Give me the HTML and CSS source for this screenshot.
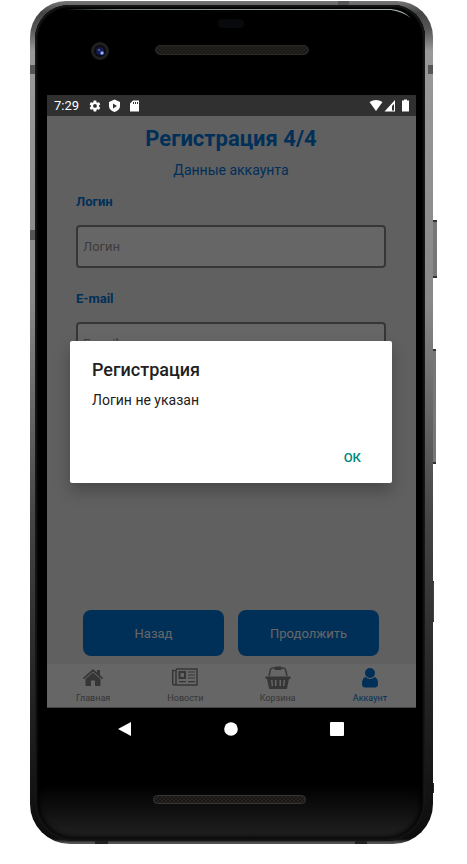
FILE: index.html
```html
<!DOCTYPE html>
<html lang="ru">
<head>
<meta charset="utf-8">
<meta name="viewport" content="width=device-width, initial-scale=1">
<title>Регистрация</title>
<link rel="stylesheet" href="styles.css">
</head>
<body>
<div class="phone">
  <span class="key key-power"></span>
  <span class="key key-volume"></span>
  <span class="key key-lower"></span>
  <span class="key key-foot"></span>
  <span class="seam seam-left-top"></span>
  <span class="seam seam-left-mid"></span>
  <span class="seam seam-right-top"></span>
  <span class="seam seam-top"></span>
  <span class="seam seam-bottom-left"></span>
  <span class="seam seam-bottom-right"></span>
  <div class="bezel">
    <svg class="hardware" viewBox="0 0 390 90" height="90" aria-hidden="true">
      <defs>
        <linearGradient id="shine" x1="0" x2="1"><stop offset="0" stop-color="#899" stop-opacity="0"/><stop offset=".15" stop-color="#788585"/><stop offset="1" stop-color="#a9b5b5"/></linearGradient>
        <pattern id="mesh" width="4" height="4" patternUnits="userSpaceOnUse"><rect width="4" height="4" fill="#171614"/><circle cx="1" cy="1" r="1" fill="#2d2a25"/><circle cx="3" cy="3" r="1" fill="#2b2823"/></pattern>
      </defs>
      <path d="M30 4H356Q368 5 376 13Q368 7 356 5H30Z" fill="url(#shine)"/>
      <rect x="183" y="14" width="26" height="9" rx="4" fill="#08090d"/>
      <circle cx="65" cy="46" r="9" fill="#211f20"/>
      <circle cx="65" cy="46" r="6" fill="#0b0b12"/>
      <circle cx="65" cy="46" r="4" fill="#151b45"/>
      <circle cx="64" cy="45" r="1" fill="#5773c8"/>
      <circle cx="67" cy="48" r="2" fill="#4e6fe0"/>
      <circle cx="67" cy="48" r="1" fill="#b9ccff"/>
      <rect x="120.500" y="40.500" width="153" height="9" rx="4.500" fill="url(#mesh)" stroke="#2b2a28"/>
    </svg>
    <div class="screen">
      <header class="status">
        <span>7:29</span>
        <svg class="status-left" viewBox="0 0 54 14" width="54" height="14" fill="#fff" aria-hidden="true">
          <path transform="translate(-.5 .5) scale(.54)" d="M19.400 13a7.500 7.500 0 0 0 0-2l2.100-1.600c.2-.2.300-.5.100-.7l-2-3.500c-.1-.2-.4-.3-.6-.2l-2.500 1a7 7 0 0 0-1.700-1l-.4-2.600c0-.3-.2-.4-.5-.4h-4c-.3 0-.4.200-.5.400L9 5a7 7 0 0 0-1.700 1l-2.500-1c-.2-.1-.5 0-.6.200l-2 3.500c-.1.200-.1.500.1.700L4.500 11a7.500 7.500 0 0 0 0 2l-2.200 1.600c-.2.200-.2.500-.1.700l2 3.500c.1.200.4.300.6.200l2.500-1a7 7 0 0 0 1.700 1l.4 2.600c.1.200.2.400.5.400h4c.300 0 .5-.2.500-.4l.4-2.600a7 7 0 0 0 1.700-1l2.500 1c.2.100.5 0 .6-.2l2-3.500c.1-.2.100-.5-.1-.7zM12 15.500a3.500 3.500 0 1 1 0-7 3.500 3.500 0 0 1 0 7z"/>
          <path fill-rule="evenodd" d="M25.500 .5L31 3V7Q31 11 25.500 13Q20 11 20 7V3ZM24 4.500V9.500L28 7Z"/>
          <path fill-rule="evenodd" d="M44 1.500H50V12.500H41V4.500ZM44 3V5H45V3ZM46 3V5H47V3ZM48 3V5H49V3Z"/>
        </svg>
        <svg class="status-right" viewBox="0 0 40 14" width="40" height="14" fill="#fff" aria-hidden="true">
          <path d="M.5 3Q7-1 13.500 3L7 12Z"/>
          <path fill-rule="evenodd" d="M26 1V12.500H15.500ZM25 5L23 7V11.500H25Z"/>
          <path d="M35 .5H38V1.500H40V12.500H33V1.500H35Z"/>
        </svg>
      </header>
      <div class="app">
        <main class="form">
          <h1>Регистрация 4/4</h1>
          <p class="subtitle">Данные аккаунта</p>
          <label for="login">Логин</label>
          <input id="login" type="text" placeholder="Логин">
          <label for="email">E-mail</label>
          <input id="email" type="email" placeholder="E-mail">
          <div class="actions">
            <button type="button">Назад</button>
            <button type="button">Продолжить</button>
          </div>
        </main>
        <nav class="tabs">
          <a href="#home">
            <svg viewBox="0 0 26 24" width="26" height="24" fill="currentColor" aria-hidden="true"><path d="M13 8.500L20.500 15V22H15V16.500H11V22H5.500V15Z"/><path d="M13 5L17 8.500V6H20V11L23.200 14L22 15.300L13 7.500L4 15.300L2.800 14Z"/></svg>
            Главная
          </a>
          <a href="#news">
            <svg viewBox="0 0 26 24" width="26" height="24" fill="none" stroke="currentColor" stroke-width="1.500" aria-hidden="true"><path d="M4 5H25V21H2Q.7 21 .7 19V6.500H4V19.500Q4 21 2.500 21"/><path d="M7.500 8H13V14H7.500Z" stroke-width="2"/><path d="M16 8H23M16 11H23M16 14H23M7 17.700H14M16 17.700H23" stroke-width="1.200"/></svg>
            Новости
          </a>
          <a href="#cart">
            <svg viewBox="0 0 26 24" width="26" height="24" aria-hidden="true"><path d="M4 12L5.500 5.500Q6 4 8 4H18Q20 4 20.500 5.500L22 12" fill="none" stroke="currentColor" stroke-width="1.500"/><rect x="9.500" y="2.500" width="7" height="3.500" rx="1" fill="currentColor"/><path fill="currentColor" fill-rule="evenodd" d="M.5 12.500H25.500V15H24L22 24.500Q21.800 25 21 25H5Q4.200 25 4 24.500L2 15H.5ZM6 16L6.700 22H8L7.500 16ZM10 16V22H11.500V16ZM14.500 16V22H16V16ZM18.500 16L18 22H19.300L20 16Z"/></svg>
            Корзина
          </a>
          <a href="#account" class="current">
            <svg viewBox="0 0 26 24" width="26" height="24" fill="currentColor" aria-hidden="true"><circle cx="13" cy="9" r="5"/><path d="M8.500 13Q13 17 17.500 13Q21 14 21 19.500Q21 23.500 18 23.500H8Q5 23.500 5 19.500Q5 14 8.500 13Z"/></svg>
            Аккаунт
          </a>
        </nav>
        <div class="scrim">
          <section class="dialog" role="dialog" aria-labelledby="dialog-title">
            <h2 id="dialog-title">Регистрация</h2>
            <p>Логин не указан</p>
            <button type="button">ОК</button>
          </section>
        </div>
      </div>
    </div>
    <div class="system">
      <svg viewBox="0 0 14 16" width="14" height="16" aria-hidden="true"><path d="M13 1V15L0 8Z" fill="#fff"/></svg>
      <svg viewBox="0 0 14 16" width="14" height="16" aria-hidden="true"><circle cx="7" cy="8" r="6.800" fill="#fff"/></svg>
      <svg viewBox="0 0 14 16" width="14" height="16" aria-hidden="true"><rect y="1" width="14" height="14" rx="1" fill="#fff"/></svg>
    </div>
    <svg class="hardware" viewBox="0 0 390 91" height="91" aria-hidden="true">
      <rect x="118.500" y="45.500" width="152" height="8" rx="4" fill="url(#mesh)" stroke="#383632"/>
    </svg>
  </div>
</div>
</body>
</html>
```
FILE: styles.css
```css
* {
  box-sizing: border-box;
}

body {
  margin: 0;
  background: #fff;
  font-family: Roboto, "Noto Sans", sans-serif;
  font-size: 13px;
}

h1, h2, p {
  margin: 0;
}

button, input {
  font: inherit;
}

.phone {
  position: relative;
  margin: 1px 34px 18px 30px;
  padding: 4px 8px 3px 5px;
  border-radius: 36px 36px 40px 40px;
  background: linear-gradient(#777 0, #444 12px, #555 28px, #999 50px, #888 300px, #444 520px, #222 700px, #0c0c0c 838px, #555 842px);
}

.key {
  position: absolute;
  left: 100%;
  width: 3px;
  background: #777;
  border: solid #333;
  border-width: 2px 0;
}

.key-power { top: 219px; height: 58px; width: 4px; }
.key-volume { top: 348px; height: 115px; }
.key-lower { top: 580px; height: 41px; width: 1px; background: #444; }
.key-foot { top: 782px; height: 10px; width: 1px; background: #222; }

.seam {
  position: absolute;
  background: #555;
}

.seam-left-top { left: 0; top: 64px; width: 5px; height: 9px; }
.seam-left-mid { left: 0; top: 229px; width: 5px; height: 10px; }
.seam-right-top { right: 0; top: 64px; width: 5px; height: 9px; }
.seam-top { right: 84px; top: 0; width: 11px; height: 4px; }
.seam-bottom-left { left: 65px; bottom: 0; width: 13px; height: 3px; background: #222; }
.seam-bottom-right { right: 66px; bottom: 0; width: 12px; height: 3px; background: #222; }

.bezel {
  padding: 0 9px 0 12px;
  border-radius: 34px 32px 38px 38px;
  background: linear-gradient(#000 780px, #232323 836px);
  box-shadow: inset 0 0 2px 2px #181818, inset 0 0 5px 4px #000;
}

.hardware {
  display: block;
  width: calc(100% + 21px);
  margin: 0 -9px 0 -12px;
}

.status {
  display: flex;
  align-items: center;
  height: 21px;
  padding: 0 7px;
  background: #303030;
  color: #fff;
}

.status-left {
  margin-left: 10px;
}

.status-right {
  margin-left: auto;
}

.app {
  position: relative;
  display: flex;
  flex-direction: column;
  min-height: 592px;
  background: #f0f0f0;
}

.form {
  display: flex;
  flex: 1;
  flex-direction: column;
  padding: 8px 30px 8px 29px;
}

h1 {
  color: #07d;
  font-size: 22px;
  line-height: 30px;
  text-align: center;
}

.subtitle {
  margin-top: 8px;
  color: #07d;
  font-size: 14px;
  line-height: 16px;
  text-align: center;
}

label {
  margin-top: 16px;
  color: #07d;
  font-weight: 700;
  line-height: 16px;
}

input {
  width: 100%;
  height: 43px;
  margin: 15px 0 7px;
  padding: 0 5px;
  border: 2px solid #888;
  border-radius: 4px;
  background: #fff;
}

input::placeholder {
  color: #999;
  opacity: 1;
}

.actions {
  display: grid;
  grid-template-columns: 1fr 1fr;
  gap: 14px;
  margin-top: auto;
  padding: 0 7px;
}

.actions button {
  height: 46px;
  border: 0;
  border-radius: 8px;
  background: #07d;
  color: #fff;
}

.tabs {
  display: grid;
  grid-template-columns: repeat(4, 1fr);
  height: 44px;
  border-bottom: 1px solid #aaa;
  background: #fff;
}

.tabs a {
  display: flex;
  flex-direction: column;
  align-items: center;
  color: #888;
  font-size: 9px;
  line-height: 20px;
  text-decoration: none;
}

.tabs svg {
  flex: none;
  overflow: visible;
}

.tabs .current {
  color: #07d;
}

.scrim {
  position: absolute;
  inset: 0;
  display: flex;
  align-items: center;
  padding: 0 24px 0 23px;
  background: rgba(0, 0, 0, 0.6);
}

.dialog {
  display: flex;
  flex: 1;
  flex-direction: column;
  min-height: 142px;
  padding: 17px 22px 12px;
  border-radius: 2px;
  background: #fff;
  color: #212121;
  box-shadow: 0 8px 16px rgba(0, 0, 0, 0.25);
}

h2 {
  font-size: 18px;
  font-weight: 500;
  line-height: 24px;
}

.dialog p {
  margin-top: 8px;
  font-size: 14px;
  line-height: 20px;
}

.dialog button {
  align-self: flex-end;
  margin-top: auto;
  padding: 4px 9px;
  border: 0;
  background: none;
  color: #00897b;
  font-weight: 500;
  line-height: 18px;
}

.system {
  display: flex;
  align-items: center;
  justify-content: center;
  gap: 92px;
  height: 42px;
  padding-right: 2px;
}
```
